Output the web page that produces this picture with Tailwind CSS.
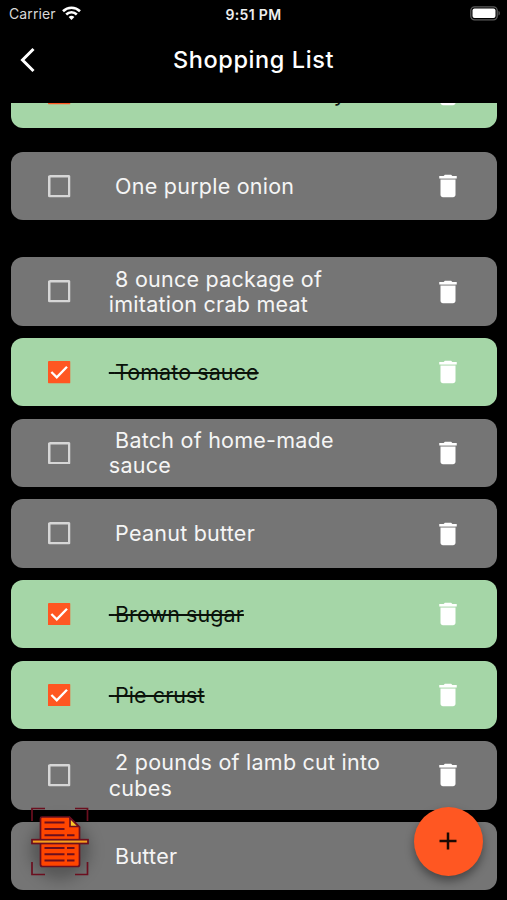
<!DOCTYPE html>
<html lang="en">
<head>
    <meta charset="UTF-8">
    <meta name="viewport" content="width=device-width, initial-scale=1.0">
    <title>Shopping List</title>
    <script src="https://cdn.jsdelivr.net/npm/@tailwindcss/browser@4"></script>
</head>
<body class="bg-black font-['Inter',sans-serif]">
    <svg class="hidden">
        <symbol id="box" viewBox="0 0 18 18"><path fill="#d6d6d6" d="M16 2v14H2V2h14m0-2H2C.9 0 0 .9 0 1.200v15.600C0 17.300.7 18 1.200 18h15.600c.6 0 1.200-.7 1.200-1.200V1.200C18 .7 17.300 0 16.800 0z"/></symbol>
        <symbol id="checked" viewBox="0 0 18 18"><rect width="18" height="18" rx="0.8" fill="#ff5722"/><path d="M2.700 8.800l4.300 4.200 8.200-8.400" fill="none" stroke="#fff" stroke-width="1.900"/></symbol>
        <symbol id="trash" viewBox="0 0 24 24"><path fill="#fff" d="M6 19c0 1.100.9 2 2 2h8c1.100 0 2-.9 2-2V7H6v12zM19 4h-3.500l-1-1h-5l-1 1H5v2h14V4z"/><path fill="#fff" fill-opacity="0.4" d="M6 6h12v1H6z"/></symbol>
    </svg>

    <div class="relative flex flex-col w-[507px] h-[900px] overflow-hidden bg-black">
        <!-- Status bar -->
        <div class="grid grid-cols-3 items-center h-[27px] pl-[9px] pr-[6px] shrink-0">
            <div class="flex items-center gap-[7px] text-[#d8d8d8] text-[14px] tracking-[0.1px]">
                Carrier
                <svg class="w-[19px] h-[14px] -ml-px -mt-px" viewBox="0 0 19 14" fill="none" stroke="#fff" stroke-width="2.600">
                    <path d="M1 5.200a12.200 12.200 0 0 1 17 0"/>
                    <path d="M4.200 8.500a7.500 7.500 0 0 1 10.600 0"/>
                    <path d="M9.500 14L6.600 11.100a4.100 4.100 0 0 1 5.800 0z" fill="#fff" stroke="none"/>
                </svg>
            </div>
            <div class="-mr-px -ml-1 mt-px text-center font-semibold text-[14px] tracking-[0.35px] text-[#eee]">9:51 PM</div>
            <div class="flex justify-end">
                <svg class="w-[31px] h-[15px]" viewBox="0 0 31 15">
                    <rect x="0.800" y="0.800" width="26.400" height="13" rx="3.800" fill="none" stroke="#5c5c5c" stroke-width="1.300"/>
                    <rect x="2.500" y="2.500" width="23" height="9.600" rx="2" fill="#fff"/>
                    <path d="M28.500 5v4.600c1.800-.5 1.800-4.100 0-4.600z" fill="#5c5c5c"/>
                </svg>
            </div>
        </div>

        <!-- App bar -->
        <div class="grid grid-cols-[60px_1fr_60px] items-center h-[66px] shrink-0">
            <svg class="ml-[20px] w-[16px] h-[26px]" viewBox="0 0 16 26" fill="none" stroke="#fff" stroke-width="3"><path d="M13.500 2L2.500 13l11 11"/></svg>
            <h1 class="text-center text-white text-[23.5px] font-medium tracking-[0.6px]">Shopping List</h1>
        </div>

        <!-- Items -->
        <div class="mt-[10.4px] flex-1 overflow-hidden pl-[10.800px] pr-[10px] text-[21.500px] leading-[25.600px] tracking-[0.24px] text-[#f5f5f5]">
            <div class="-mt-[44px] mb-[24.500px] flex items-center h-[68.300px] rounded-xl bg-[#a5d6a7] pl-[37.500px] pr-[34px]">
                <svg class="w-[22.500px] h-[22.500px] mr-[38px]"><use href="#checked"/></svg>
                <p class="w-[280px] whitespace-pre-wrap text-[#0a120a] tracking-[0.08px] line-through decoration-[1.500px]"> One rib of dried celery</p>
                <svg class="w-[30px] h-[30px] ml-auto"><use href="#trash"/></svg>
            </div>
            <div class="mb-[37px] flex items-center h-[68.300px] rounded-xl bg-[#757575] pl-[37.500px] pr-[34px]">
                <svg class="w-[22.500px] h-[22.500px] mr-[38px]"><use href="#box"/></svg>
                <p class="w-[280px] mt-px whitespace-pre-wrap"> One purple onion</p>
                <svg class="w-[30px] h-[30px] ml-auto"><use href="#trash"/></svg>
            </div>
            <div class="mb-[12.350px] flex items-center h-[68.300px] rounded-xl bg-[#757575] pl-[37.500px] pr-[34px]">
                <svg class="w-[22.500px] h-[22.500px] mr-[38px]"><use href="#box"/></svg>
                <p class="w-[280px] mt-px whitespace-pre-wrap"> 8 ounce package of imitation crab meat</p>
                <svg class="w-[30px] h-[30px] ml-auto"><use href="#trash"/></svg>
            </div>
            <div class="mb-[12.350px] flex items-center h-[68.300px] rounded-xl bg-[#a5d6a7] pl-[37.500px] pr-[34px]">
                <svg class="w-[22.500px] h-[22.500px] mr-[38px]"><use href="#checked"/></svg>
                <p class="w-[280px] mt-px whitespace-pre-wrap text-[#0a120a] tracking-[0.08px] line-through decoration-[1.500px]"> Tomato sauce</p>
                <svg class="w-[30px] h-[30px] ml-auto"><use href="#trash"/></svg>
            </div>
            <div class="mb-[12.350px] flex items-center h-[68.300px] rounded-xl bg-[#757575] pl-[37.500px] pr-[34px]">
                <svg class="w-[22.500px] h-[22.500px] mr-[38px]"><use href="#box"/></svg>
                <p class="w-[280px] mt-px whitespace-pre-wrap"> Batch of home-made sauce</p>
                <svg class="w-[30px] h-[30px] ml-auto"><use href="#trash"/></svg>
            </div>
            <div class="mb-[12.350px] flex items-center h-[68.300px] rounded-xl bg-[#757575] pl-[37.500px] pr-[34px]">
                <svg class="w-[22.500px] h-[22.500px] mr-[38px]"><use href="#box"/></svg>
                <p class="w-[280px] mt-px whitespace-pre-wrap"> Peanut butter</p>
                <svg class="w-[30px] h-[30px] ml-auto"><use href="#trash"/></svg>
            </div>
            <div class="mb-[12.350px] flex items-center h-[68.300px] rounded-xl bg-[#a5d6a7] pl-[37.500px] pr-[34px]">
                <svg class="w-[22.500px] h-[22.500px] mr-[38px]"><use href="#checked"/></svg>
                <p class="w-[280px] mt-px whitespace-pre-wrap text-[#0a120a] tracking-[0.08px] line-through decoration-[1.500px]"> Brown sugar</p>
                <svg class="w-[30px] h-[30px] ml-auto"><use href="#trash"/></svg>
            </div>
            <div class="mb-[12.350px] flex items-center h-[68.300px] rounded-xl bg-[#a5d6a7] pl-[37.500px] pr-[34px]">
                <svg class="w-[22.500px] h-[22.500px] mr-[38px]"><use href="#checked"/></svg>
                <p class="w-[280px] mt-px whitespace-pre-wrap text-[#0a120a] tracking-[0.08px] line-through decoration-[1.500px]"> Pie crust</p>
                <svg class="w-[30px] h-[30px] ml-auto"><use href="#trash"/></svg>
            </div>
            <div class="mb-[12.350px] flex items-center h-[68.300px] rounded-xl bg-[#757575] pl-[37.500px] pr-[34px]">
                <svg class="w-[22.500px] h-[22.500px] mr-[38px]"><use href="#box"/></svg>
                <p class="w-[280px] mt-px whitespace-pre-wrap"> 2 pounds of lamb cut into cubes</p>
                <svg class="w-[30px] h-[30px] ml-auto"><use href="#trash"/></svg>
            </div>
            <div class="flex items-center h-[68.300px] rounded-xl bg-[#757575] pl-[98px] pr-[34px]">
                <p class="w-[280px] mt-px whitespace-pre-wrap"> Butter</p>
            </div>
        </div>

        <!-- Scan button -->
        <button class="absolute left-[31px] top-[807px] w-[58px] h-[69px]">
            <span class="absolute left-[3px] top-[14px] w-[52px] h-[52px] rounded-full shadow-[0_3px_12px_4px_rgba(0,0,0,0.25)] bg-black/25 blur-[4px]"></span>
            <svg class="relative w-[58px] h-[69px]" viewBox="0 0 58 69" fill="none" stroke="#6b0f1f" stroke-width="1.700">
                <path d="M1 14V1.500h13M44 1.500h12.500V14M1 55v12.500h13M44 67.500h12.500V55"/>
                <path d="M11 10h27.500L48.500 20v37.500q0 2-2 2h-35q-2 0-2-2V11.500q0-1.500 1.500-1.500z" fill="#ff4500"/>
                <path d="M39 11v8.500h8.500z" fill="#ffc928"/>
                <path d="M13.500 15.500h20M13.500 22h20M13.500 28.200h20M36 28.200h7.500M13.500 41h20M36 41h7.500M13.500 47.200h20M36 47.200h7.500M13.500 53.500h20M36 53.500h7.500" stroke-width="2"/>
                <rect x="1" y="32.700" width="56" height="3.800" fill="#f5a01e"/>
            </svg>
        </button>

        <!-- Add button -->
        <button class="absolute left-[414px] top-[807px] flex items-center justify-center w-[68.500px] h-[68.500px] rounded-full bg-[#ff5722] shadow-[0_5px_10px_rgba(0,0,0,0.4)]">
            <svg class="w-[18px] h-[18px]" viewBox="0 0 18 18" stroke="#1a0903" stroke-width="2.500"><path d="M9 0.500v17M0.500 9h17"/></svg>
        </button>
    </div>
</body>
</html>
